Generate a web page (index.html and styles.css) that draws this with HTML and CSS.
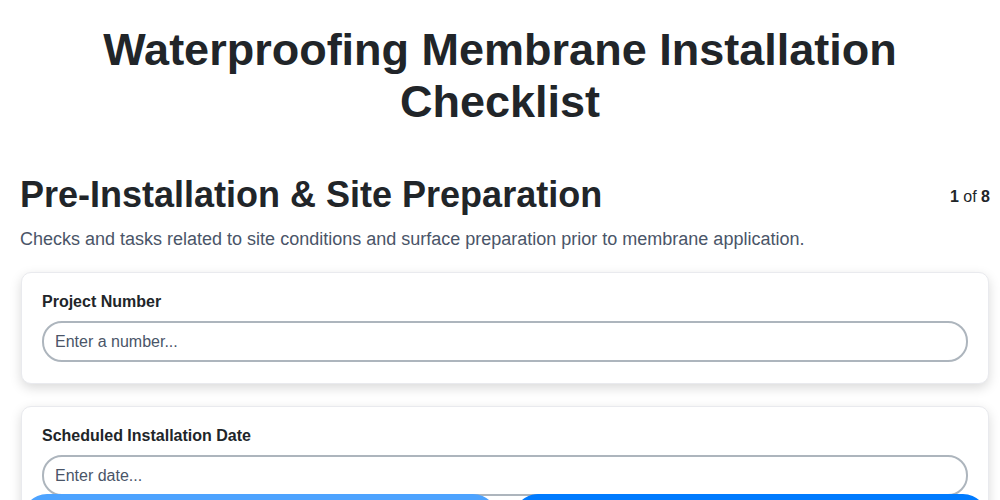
FILE: index.html
```html
<!DOCTYPE html>
<html lang="en">
<head>
  <meta charset="UTF-8">
  <meta name="viewport" content="width=device-width, initial-scale=1.0">
  <title>Waterproofing Membrane Installation Checklist</title>
  <link rel="stylesheet" href="styles.css">
</head>
<body>
  <h1>Waterproofing Membrane Installation Checklist</h1>

  <div class="section">
    <div class="section-head">
      <h2>Pre-Installation &amp; Site Preparation</h2>
      <div class="progress"><strong>1</strong> of <strong>8</strong></div>
    </div>
    <p class="section-desc">Checks and tasks related to site conditions and surface preparation prior to membrane application.</p>

    <!-- campos da secao -->
    <div class="field-card">
      <label for="project-number">Project Number</label>
      <input type="text" id="project-number" placeholder="Enter a number...">
    </div>

    <div class="field-card">
      <label for="install-date">Scheduled Installation Date</label>
      <input type="text" id="install-date" placeholder="Enter date...">
    </div>
  </div>

  <div class="nav-buttons">
    <button class="prev" disabled>Previous</button>
    <button class="next">Next</button>
  </div>
</body>
</html>
```

FILE: styles.css
```css
body {
  font-family: "Liberation Sans", Arial, sans-serif;
  margin: 0;
  padding: 20px 10px;
  background-color: #fff;
  color: #212529;
}
h1 {
  text-align: center;
  font-size: 45px;
  line-height: 52px;
  margin: 4px 60px 45px;
}
.section {
  padding-left: 10px;
}
.section-head {
  display: flex;
  justify-content: space-between;
  align-items: center;
}
h2 {
  font-size: 36px;
  line-height: 44px;
  margin: 0;
}
.progress {
  font-size: 16px;
  padding-top: 3px;
}
.section-desc {
  color: #4a5568;
  font-size: 18px;
  margin: 12px 0 22px;
}
.field-card {
  background-color: #fff;
  border: 1px solid #e9eaee;
  border-radius: 10px;
  box-shadow: 0 4px 12px rgba(0, 0, 0, 0.15);
  padding: 20px 20px 21px;
  margin: 0 1px 22px;
}
.field-card label {
  display: block;
  font-weight: bold;
  font-size: 16px;
  margin-bottom: 10px;
}
.field-card input {
  box-sizing: border-box;
  width: 100%;
  height: 41px;
  padding: 0 11px;
  border: 2px solid #adb5bd;
  border-radius: 20px;
  font-family: inherit;
  font-size: 16px;
  color: #212529;
}
.field-card input::placeholder {
  color: #4a5568;
}
.nav-buttons {
  position: fixed;
  left: 22px;
  right: 12px;
  bottom: -44px;
  display: flex;
  gap: 15px;
}
.nav-buttons button {
  flex: 1;
  height: 50px;
  border: none;
  border-radius: 25px;
  color: #fff;
  font-size: 16px;
  background-color: #007bff;
}
.nav-buttons .prev {
  background-color: #4da3ff;
}
```
